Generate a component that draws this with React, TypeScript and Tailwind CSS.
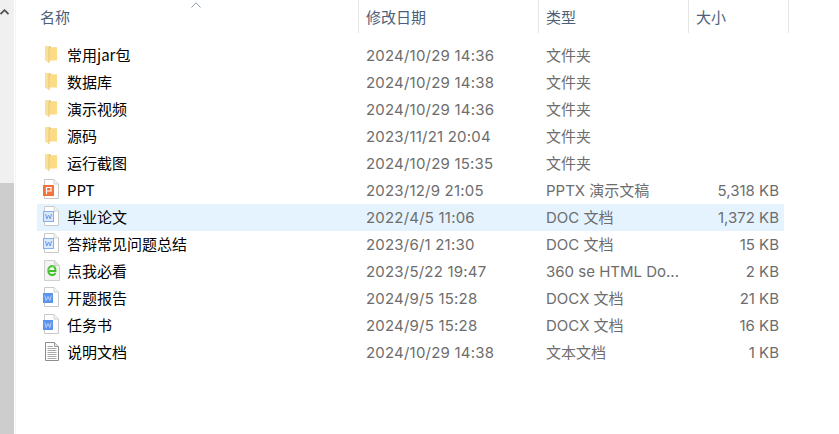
const font = { fontFamily: '"Noto Sans CJK SC", "Noto Sans", sans-serif' };

type Kind = 'folder' | 'ppt' | 'doc' | 'docx' | 'html' | 'txt';

const rows: { name: string; date: string; type: string; size: string; kind: Kind; sel?: boolean }[] = [
  { name: '常用jar包', date: '2024/10/29 14:36', type: '文件夹', size: '', kind: 'folder' },
  { name: '数据库', date: '2024/10/29 14:38', type: '文件夹', size: '', kind: 'folder' },
  { name: '演示视频', date: '2024/10/29 14:36', type: '文件夹', size: '', kind: 'folder' },
  { name: '源码', date: '2023/11/21 20:04', type: '文件夹', size: '', kind: 'folder' },
  { name: '运行截图', date: '2024/10/29 15:35', type: '文件夹', size: '', kind: 'folder' },
  { name: 'PPT', date: '2023/12/9 21:05', type: 'PPTX 演示文稿', size: '5,318 KB', kind: 'ppt' },
  { name: '毕业论文', date: '2022/4/5 11:06', type: 'DOC 文档', size: '1,372 KB', kind: 'doc', sel: true },
  { name: '答辩常见问题总结', date: '2023/6/1 21:30', type: 'DOC 文档', size: '15 KB', kind: 'doc' },
  { name: '点我必看', date: '2023/5/22 19:47', type: '360 se HTML Do...', size: '2 KB', kind: 'html' },
  { name: '开题报告', date: '2024/9/5 15:28', type: 'DOCX 文档', size: '21 KB', kind: 'docx' },
  { name: '任务书', date: '2024/9/5 15:28', type: 'DOCX 文档', size: '16 KB', kind: 'docx' },
  { name: '说明文档', date: '2024/10/29 14:38', type: '文本文档', size: '1 KB', kind: 'txt' },
];

function Page() {
  return (
    <>
      <path d="M7.5 2.5H17L21.5 7V21.5H7.5Z" fill="#fff" stroke="#c9c9c9" />
      <path d="M17 2.5V7H21.5" fill="#f2f2f2" stroke="#d4d4d4" />
    </>
  );
}

function FileIcon({ kind }: { kind: Kind }) {
  return (
    <svg width="24" height="27" viewBox="0 0 24 27" className="shrink-0">
      {kind === 'folder' && (
        <>
          <path d="M8 4H13L14 5.5H20V18H8Z" fill="#e9c262" />
          <path d="M12 6H20V18.5H12Z" fill="#fcdb85" />
          <path d="M8 4H12V21L8 18.5Z" fill="#f9e09b" />
          <path d="M12 6V21" stroke="#e6c068" strokeWidth="0.8" />
        </>
      )}
      {kind === 'ppt' && (
        <>
          <Page />
          <rect x="6" y="8" width="11" height="11" fill="#f4733d" />
          <path d="M9.5 17V10.5H14V14H10" fill="none" stroke="#fff" strokeWidth="1.2" />
        </>
      )}
      {kind === 'doc' && (
        <>
          <Page />
          <rect x="6.5" y="7.5" width="10" height="10" fill="#dbe8fb" stroke="#83aef0" />
          <path d="M8.5 10L9.8 15L11.5 11L13.2 15L14.5 10" fill="none" stroke="#6c9cec" strokeWidth="1" />
        </>
      )}
      {kind === 'docx' && (
        <>
          <Page />
          <rect x="6" y="8" width="10" height="10" fill="#5b93ee" />
          <path d="M7.8 10.5L9.2 15.5L11 11.5L12.8 15.5L14.2 10.5" fill="none" stroke="#bcd3f8" strokeWidth="1" />
        </>
      )}
      {kind === 'html' && (
        <>
          <path d="M7.5 2.5H17.5L22.5 7.5V22.5H7.5Z" fill="#f4f4f2" stroke="#cfcfcf" />
          <path d="M17.5 2.5V7.5H22.5" fill="#e4e4e4" stroke="#d4d4d4" />
          <path d="M12 13H18.5C18.8 10 17.2 8 15 8C12.8 8 11.2 10 11.2 12.6C11.2 15.2 13 17 15.2 17C16.7 17 17.8 16.3 18.5 15" fill="none" stroke="#3fbf2c" strokeWidth="1.9" />
          <path d="M10 14C11.5 11 15 8 19.5 7.5" fill="none" stroke="#9ae08a" strokeWidth="0.8" />
        </>
      )}
      {kind === 'txt' && (
        <>
          <path d="M8.5 3.5H17.5L21.5 7.5V21.5H8.5Z" fill="#fff" stroke="#8d8d8d" />
          <path d="M17.5 3.5V7.5H21.5" fill="#e6e6e6" stroke="#9a9a9a" />
          <path d="M10.5 7.5H16M10.5 9.5H19.5M10.5 11.5H19.5M10.5 13.5H19.5M10.5 15.5H19.5M10.5 17.5H19.5M10.5 19.5H19.5" stroke="#a8a8a8" strokeWidth="1" />
        </>
      )}
    </svg>
  );
}

function HeaderCell({ label, className }: { label: string; className: string }) {
  return (
    <div className={`flex h-full shrink-0 items-center border-r border-[#e5e5e5] pt-[1px] ${className}`}>{label}</div>
  );
}

export default function App() {
  return (
    <div style={font} className="flex h-[434px] w-[839px] overflow-hidden bg-white text-[15px]">
      <div className="flex h-full w-[14px] shrink-0 flex-col bg-[#f0f0f0]">
        <div className="flex h-[183px] shrink-0 pt-[9px]">
          <svg width="9" height="6" viewBox="0 0 9 6">
            <path d="M0.5 5L4.5 1.2L8.5 5" fill="none" stroke="#505050" strokeWidth="1.8" />
          </svg>
        </div>
        <div className="flex-1 bg-[#cdcdcd]" />
      </div>
      <div className="w-[2px] shrink-0 border-r border-[#f5f5f5]" />
      <div className="flex min-w-0 flex-1 flex-col">
        <div className="relative flex h-[33px] shrink-0 text-[#4c607a]">
          <svg width="10" height="6" viewBox="0 0 10 6" className="absolute left-[175px] top-[2px]">
            <path d="M0.5 5.5L5 0.8L9.5 5.5" fill="none" stroke="#8f9aa8" strokeWidth="1" />
          </svg>
          <HeaderCell label="名称" className="w-[343px] pl-[24px]" />
          <HeaderCell label="修改日期" className="w-[180px] pl-[7px]" />
          <HeaderCell label="类型" className="w-[150px] pl-[7px]" />
          <HeaderCell label="大小" className="w-[100px] pl-[7px]" />
        </div>
        <div className="flex flex-col pt-[9px] pl-[21px]">
          {rows.map((r) => (
            <div key={r.name} className={`flex h-[27px] w-[747px] items-center ${r.sel ? 'bg-[#e5f3ff]' : ''}`}>
              <div className="flex w-[322px] shrink-0 items-center gap-[6px] text-black">
                <FileIcon kind={r.kind} />
                <span>{r.name}</span>
              </div>
              <div className="w-[180px] shrink-0 pl-[7px] pt-[1px] font-['Inter','Noto_Sans_CJK_SC',sans-serif] tracking-[0.2px] text-[#6d6d6d]">{r.date}</div>
              <div className="w-[150px] shrink-0 pl-[7px] pt-[1px] font-['Inter','Noto_Sans_CJK_SC',sans-serif] text-[#6d6d6d]">{r.type}</div>
              <div className="w-[90px] shrink-0 pt-[1px] text-right font-['Inter','Noto_Sans_CJK_SC',sans-serif] text-[#6d6d6d]">{r.size}</div>
            </div>
          ))}
        </div>
      </div>
    </div>
  );
}
